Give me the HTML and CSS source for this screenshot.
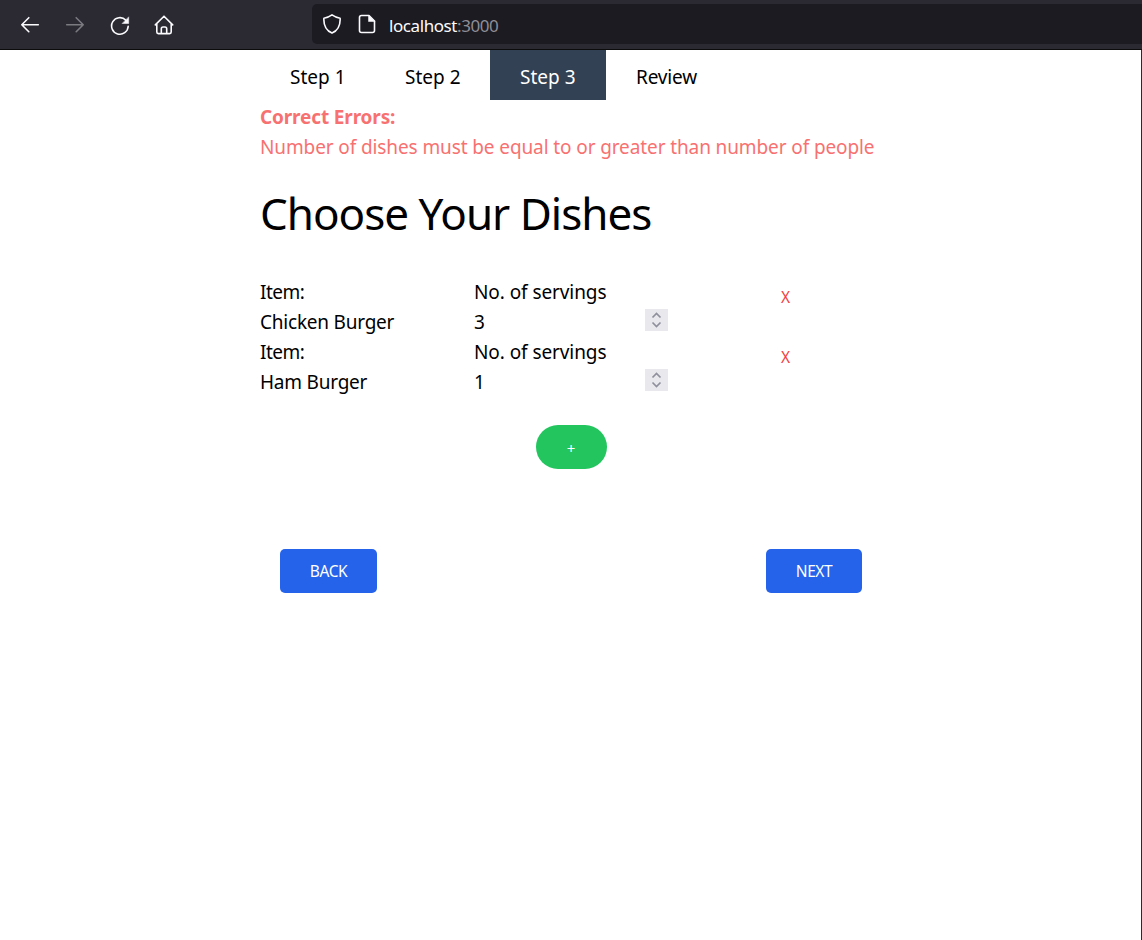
FILE: index.html
```html
<!DOCTYPE html>
<html lang="en">
<head>
<meta charset="utf-8">
<title>Choose Your Dishes</title>
<link rel="stylesheet" href="styles.css">
</head>
<body>
<header class="toolbar">
  <div class="nav-icons">
    <svg class="icon" viewBox="0 0 20 20"><path d="M18.300 9.700H2M8.800 2.700 1.800 9.700l7 7"/></svg>
    <svg class="icon dim" viewBox="0 0 20 20"><path d="M1.700 9.700H18M11.200 2.700l7 7-7 7"/></svg>
    <svg class="icon reload" viewBox="0 0 20 20"><path d="M18.200 10.300A8.300 8.300 0 1 1 15.800 4.100"/><path class="solid" d="M18.700 1.200v6.300h-6.300z"/></svg>
    <svg class="icon home" viewBox="0 0 20 20"><path d="M1.300 9.900 10 1.200l8.700 8.700M2.800 9v8.100q0 1.500 1.500 1.500h11.400q1.500 0 1.500-1.500V9M7.300 18.400v-4.700q0-1.700 1.700-1.700h2q1.700 0 1.700 1.700v4.700"/></svg>
  </div>
  <div class="urlbar">
    <svg class="icon" viewBox="0 0 20 20"><path d="M10 .9q4 2.800 8.100 3.300c.4 6.500-2.500 12.400-8.100 14.900C4.400 16.600 1.500 10.700 1.900 4.200Q6 3.700 10 .9z"/></svg>
    <svg class="icon page-icon" viewBox="0 0 20 20"><path d="M4.500 1.500h7.500l5.500 5.500v9.500q0 2-2 2h-11q-2 0-2-2v-13q0-2 2-2z"/><path class="solid" d="M11.500 1.500v6h6z"/></svg>
    <span class="url">localhost<span class="port">:3000</span></span>
  </div>
</header>
<main class="content">
  <nav class="tabs">
    <span class="tab">Step 1</span><span class="tab">Step 2</span><span class="tab active">Step 3</span><span class="tab review">Review</span>
  </nav>
  <div class="errors"><div class="errors-title">Correct Errors:</div><div class="errors-text">Number of dishes must be equal to or greater than number of people</div></div>
  <h1 class="title">Choose Your Dishes</h1>
  <section class="dishes">
    <div class="dish">
      <div class="item"><div class="label">Item:</div><div class="name">Chicken Burger</div></div>
      <div class="servings"><div class="servings-label">No. of servings</div><div class="amount"><span>3</span><svg class="spin" viewBox="0 0 23 22"><path d="M7.500 8.500l4-4 4 4M7.500 13.500l4 4 4-4"/></svg></div></div>
      <div class="remove">X</div>
    </div>
    <div class="dish">
      <div class="item"><div class="label">Item:</div><div class="name">Ham Burger</div></div>
      <div class="servings"><div class="servings-label">No. of servings</div><div class="amount"><span>1</span><svg class="spin" viewBox="0 0 23 22"><path d="M7.500 8.500l4-4 4 4M7.500 13.500l4 4 4-4"/></svg></div></div>
      <div class="remove">X</div>
    </div>
  </section>
  <div class="add-row"><div class="add">+</div></div>
  <div class="actions"><div class="btn">BACK</div><div class="btn next">NEXT</div></div>
</main>
</body>
</html>
```
FILE: styles.css
```css
* { box-sizing: border-box; }
body {
  margin: 0;
  height: 940px;
  overflow: hidden;
  background: #fff;
  color: #000;
  font: 19px/30px "Noto Sans", "Open Sans", sans-serif;
}
.toolbar {
  display: flex;
  height: 50px;
  padding-top: 4px;
  background: #2b2a33;
  border-bottom: 1px solid #0c0c0d;
}
.nav-icons {
  display: flex;
  gap: 25px;
  width: 312px;
  padding: 11px 0 0 20px;
}
.icon {
  flex: none;
  width: 20px;
  height: 20px;
  fill: none;
  stroke: #fbfbfe;
  stroke-width: 1.6;
  stroke-linecap: round;
  stroke-linejoin: round;
}
.icon .solid { fill: #fbfbfe; stroke-width: .5; }
.dim { stroke: #7b7a80; }
.reload { margin-top: 1px; }
.home { margin-left: -1px; }
.urlbar {
  flex: 1;
  display: flex;
  height: 40px;
  padding: 10px 0 0 10px;
  background: #1c1b22;
  border-radius: 5px 0 0 5px;
}
.page-icon { margin-left: 15px; }
.url {
  margin-left: 12px;
  margin-top: 1px;
  color: #fbfbfe;
  font-size: 17px;
  line-height: 22px;
  letter-spacing: -.42px;
}
.port { color: #8f8e96; }
.content {
  height: 890px;
  padding: 0 259px 0 260px;
  border-right: 1px solid #2b2a33;
}
.tabs { display: flex; height: 50px; }
.tab { flex: none; width: 115px; padding: 12px 0 0 30px; white-space: nowrap; }
.active { width: 116px; background: #334155; color: #fff; }
.review { letter-spacing: -.15px; }
.errors { height: 60px; padding-top: 2px; color: #f87171; white-space: nowrap; }
.errors-title { font-weight: 700; letter-spacing: -.15px; }
.errors-text { letter-spacing: -.11px; }
.title {
  height: 67px;
  margin: 20px 0 30px;
  font-size: 44px;
  line-height: 66px;
  font-weight: 400;
  letter-spacing: -1px;
  white-space: nowrap;
}
.dish { display: flex; height: 60px; }
.item { width: 214px; }
.label { letter-spacing: -.5px; }
.name { letter-spacing: -.22px; }
.servings { width: 214px; }
.servings-label { letter-spacing: -.08px; }
.amount { display: flex; width: 194px; justify-content: space-between; }
.spin {
  width: 23px;
  height: 22px;
  margin-top: 2px;
  background: #e9e9ed;
  fill: none;
  stroke: #8f8f9d;
  stroke-width: 1.7;
}
.remove {
  width: 194px;
  padding: 5px 0 0 93px;
  color: #ef4444;
  font-size: 15.500px;
}
.add-row { display: flex; justify-content: center; height: 44px; margin-top: 28px; }
.add {
  width: 71px;
  border-radius: 22px;
  background: #22c55e;
  color: #fff;
  font-size: 15px;
  line-height: 46px;
  text-align: center;
}
.actions { display: flex; justify-content: space-between; padding: 0 20px; margin-top: 80px; }
.btn {
  width: 97px;
  height: 44px;
  border-radius: 5px;
  background: #2563eb;
  color: #fff;
  font-size: 15.500px;
  line-height: 45px;
  letter-spacing: -.4px;
  text-align: center;
}
.next { width: 96px; }
```
